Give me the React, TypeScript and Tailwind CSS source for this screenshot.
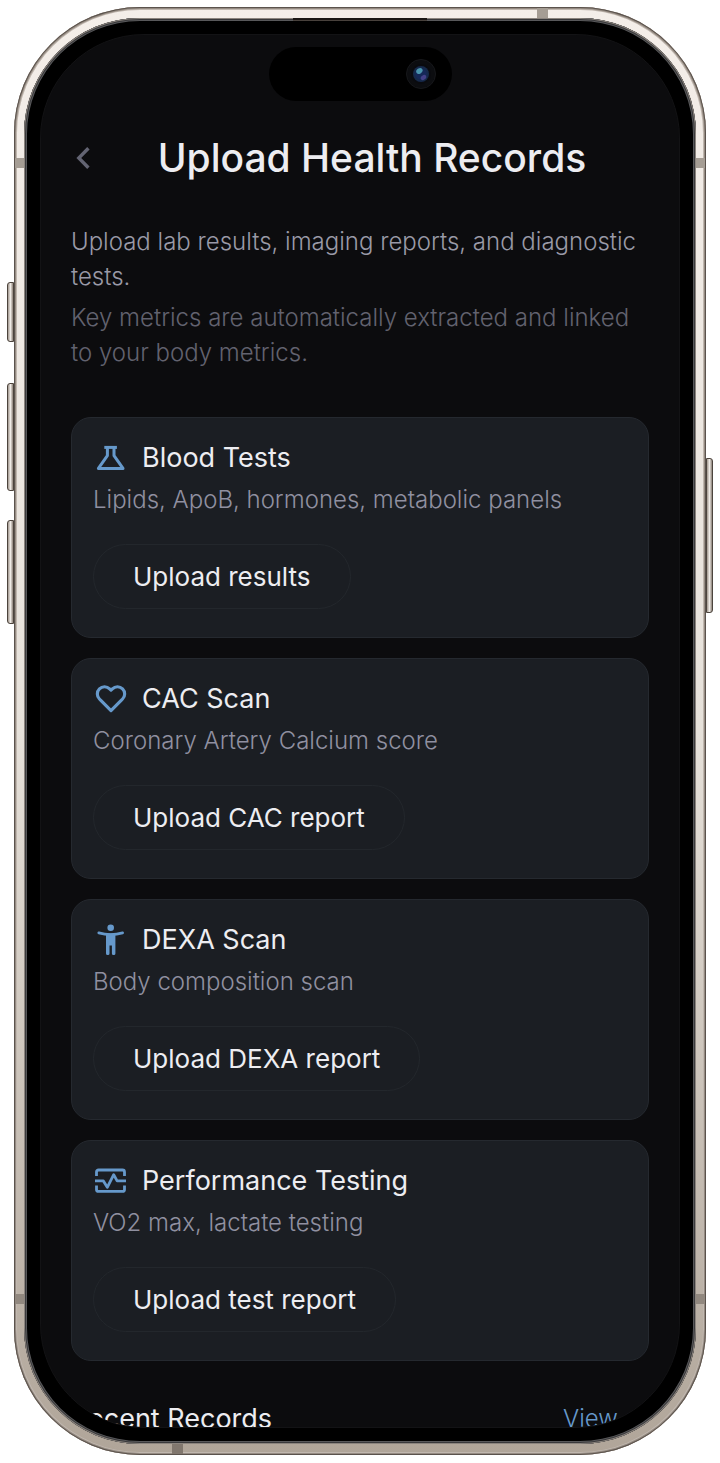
import type { ReactNode } from "react";

type RecordType = {
  title: string;
  description: string;
  action: string;
  icon: ReactNode;
};

function FlaskIcon() {
  return (
    <svg viewBox="0 0 34 34" className="size-[34px]" fill="none" stroke="currentColor" strokeWidth="3" strokeLinejoin="round" aria-hidden="true">
      <path d="M10.3 6.4h12.6" />
      <path d="M13.4 6.4v8.2L4.4 27.4h24.6l-9-12.8V6.4" />
    </svg>
  );
}

function HeartIcon() {
  return (
    <svg viewBox="-1 -0.6 26 26" className="size-[34px]" fill="none" stroke="currentColor" strokeWidth="2.4" strokeLinejoin="round" aria-hidden="true">
      <path d="M20.84 4.61a5.5 5.5 0 0 0-7.78 0L12 5.67l-1.06-1.06a5.5 5.5 0 0 0-7.78 7.78l1.06 1.06L12 21.23l7.78-7.78 1.06-1.06a5.5 5.5 0 0 0 0-7.78z" />
    </svg>
  );
}

function BodyIcon() {
  return (
    <svg viewBox="0 0 34 34" className="size-[34px]" fill="currentColor" aria-hidden="true">
      <circle cx="16.7" cy="4.8" r="3.3" />
      <path d="M4.8 9.9Q16.7 13.2 28.6 9.9" fill="none" stroke="currentColor" strokeWidth="2.8" strokeLinecap="round" />
      <path d="M12 10.5h9.4v20a1.5 1.5 0 0 1-1.5 1.5h-.5a1.5 1.5 0 0 1-1.5-1.5v-8h-2.4v8a1.5 1.5 0 0 1-1.5 1.5h-.5a1.5 1.5 0 0 1-1.5-1.5z" />
    </svg>
  );
}

function VitalsIcon() {
  return (
    <svg viewBox="0 0 34 34" className="size-[34px]" fill="none" stroke="currentColor" strokeWidth="2.8" strokeLinejoin="round" aria-hidden="true">
      <path d="M2.5 12V8a2 2 0 0 1 2-2h24a2 2 0 0 1 2 2v4" />
      <path d="M2.5 21.4v4a2 2 0 0 0 2 2h24a2 2 0 0 0 2-2v-4" />
      <path d="M1 16.9h8.4l3.9 6.4 6.4-12.6 3.4 6.2h8.9" />
    </svg>
  );
}

const records: RecordType[] = [
  {
    title: "Blood Tests",
    description: "Lipids, ApoB, hormones, metabolic panels",
    action: "Upload results",
    icon: <FlaskIcon />,
  },
  {
    title: "CAC Scan",
    description: "Coronary Artery Calcium score",
    action: "Upload CAC report",
    icon: <HeartIcon />,
  },
  {
    title: "DEXA Scan",
    description: "Body composition scan",
    action: "Upload DEXA report",
    icon: <BodyIcon />,
  },
  {
    title: "Performance Testing",
    description: "VO2 max, lactate testing",
    action: "Upload test report",
    icon: <VitalsIcon />,
  },
];

function RecordCard({ title, description, action, icon }: RecordType) {
  return (
    <section className="rounded-[20px] border border-[#25292f] bg-[#1b1e23] px-[21px] pt-[22px] pb-7">
      <div className="flex items-center gap-3.5 pl-px">
        <span className="text-[#6699cb]">{icon}</span>
        <h2 className="text-[27px] leading-9 text-[#ededf1]">{title}</h2>
      </div>
      <p className="mt-1.5 text-2xl leading-[35px] font-light text-[#9090a0]">{description}</p>
      <button className="mt-[27px] h-[65px] rounded-full border border-[#23272c] px-[39px] text-[26px] text-[#ededf1]">
        {action}
      </button>
    </section>
  );
}

function DynamicIsland() {
  return (
    <div className="mx-auto flex h-[54px] w-[183px] items-center justify-end rounded-full bg-black pr-4">
      <svg viewBox="0 0 30 30" className="size-[30px]" aria-hidden="true">
        <circle cx="15" cy="15" r="14.5" fill="#0c0d10" stroke="#17181b" />
        <circle cx="15" cy="15" r="10" fill="#0a0b0f" />
        <circle cx="15" cy="15" r="8" fill="#16294a" />
        <circle cx="15" cy="15" r="5.8" fill="#152858" />
        <ellipse cx="13.4" cy="12" rx="3.4" ry="2.6" fill="#4a94ac" transform="rotate(-35 13.4 12)" />
        <ellipse cx="17.5" cy="18.5" rx="3" ry="2.2" fill="#434088" transform="rotate(-35 17.5 18.5)" />
      </svg>
    </div>
  );
}

function Screen() {
  return (
    <main className="aspect-[640/1394] overflow-hidden rounded-[104px] border border-[#131315] bg-[#0c0c0e] px-[30px] pt-3">
      <DynamicIsland />

      <header className="mt-[37px] flex h-10 items-center">
        <button aria-label="Back" className="flex w-6 justify-center text-[#636472]">
          <svg viewBox="0 0 14 22" className="h-[22px] w-3.5" fill="none" stroke="currentColor" strokeWidth="3.4" aria-hidden="true">
            <path d="M12.4 1.3 2.8 11l9.6 9.7" />
          </svg>
        </button>
        <h1 className="flex-1 text-center text-[39px] leading-10 font-medium whitespace-nowrap text-[#ededf1]">
          Upload Health Records
        </h1>
      </header>

      <div className="mt-[46px] flex flex-col gap-1.5 text-2xl leading-[35px] font-light">
        <p className="text-[#9a9aa7]">Upload lab results, imaging reports, and diagnostic tests.</p>
        <p className="text-[#62626f]">Key metrics are automatically extracted and linked to your body metrics.</p>
      </div>

      <div className="mt-[47px] flex flex-col gap-5">
        {records.map((record) => (
          <RecordCard key={record.title} {...record} />
        ))}
      </div>

      <div className="mt-10 flex items-center justify-between">
        <h2 className="text-[27px] leading-9 text-[#ededf1]">Recent Records</h2>
        <a href="#records" className="text-2xl leading-9 font-light text-[#6699cb]">
          View all
        </a>
      </div>
    </main>
  );
}

function SideKey({ className }: { className: string }) {
  return (
    <div
      className={`border border-[#4c443d] bg-linear-to-r from-[#a1978e] via-[#efebe6] to-[#8c8178] ${className}`}
    />
  );
}

function AntennaBands() {
  return (
    <>
      <div className="absolute inset-0 flex flex-col justify-between px-px py-[151px]">
        <div className="flex justify-between">
          <span className="size-2.5 bg-[#a59d94]" />
          <span className="size-2.5 bg-[#a59d94]" />
        </div>
        <div className="flex justify-between">
          <span className="size-2.5 bg-[#91887f]" />
          <span className="size-2.5 bg-[#91887f]" />
        </div>
      </div>
      <div className="absolute inset-0 flex flex-col justify-between px-[158px] py-px">
        <span className="h-2.5 w-[11px] self-end bg-[#a59d94]" />
        <span className="h-2.5 w-[11px] bg-[#81776e]" />
      </div>
    </>
  );
}

function App() {
  return (
    <div className="flex bg-white px-[7px] pt-[7px] pb-2 font-['Inter',sans-serif]">
      {/* Action and volume keys */}
      <div className="flex w-[7px] flex-col pt-[275px]">
        <SideKey className="h-[60px] rounded-l-[3px]" />
        <SideKey className="mt-[41px] h-[108px] rounded-l-[3px]" />
        <SideKey className="mt-[29px] h-[104px] rounded-l-[3px]" />
      </div>

      {/* Titanium frame */}
      <div className="relative min-w-0 flex-1 overflow-hidden rounded-[126px] bg-linear-to-b from-[#f4eee9] via-[#e6e1da] to-[#b0a599] px-2.5 py-[11px] shadow-[inset_0_0_0_1px_#5b534d,inset_0_0_0_2px_#958b82,inset_0_0_0_3px_#c0b7af]">
        <AntennaBands />

        {/* Bezel */}
        <div className="relative rounded-[116px] bg-black p-4 shadow-[inset_0_0_0_1px_#8b847e,inset_0_0_0_2px_#39393b,inset_0_0_0_3px_#58585a]">
          <div className="absolute inset-x-0 top-0 mx-auto h-[3px] w-[134px] border-b border-[#48413c] bg-[#1b1715]" />
          <Screen />
        </div>
      </div>

      {/* Power key */}
      <div className="w-[7px] pt-[451px]">
        <SideKey className="h-[155px] rounded-r-[3px]" />
      </div>
    </div>
  );
}

export default App;
